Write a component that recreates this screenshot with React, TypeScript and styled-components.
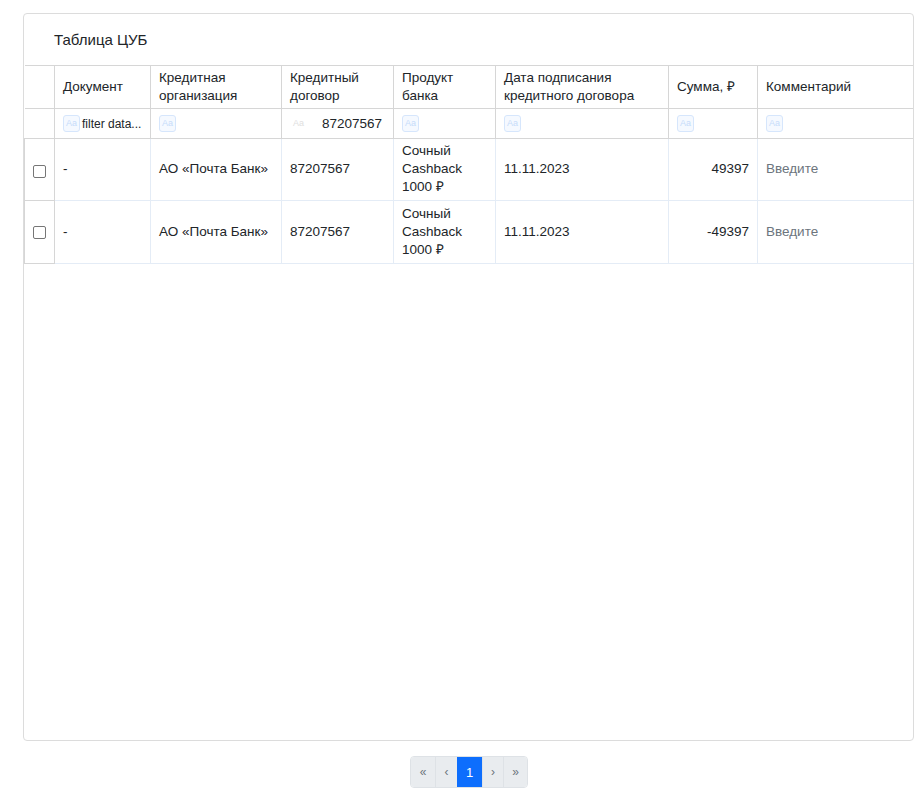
import React from "react";
import styled, { createGlobalStyle } from "styled-components";

const Global = createGlobalStyle`
  html, body { margin: 0; padding: 0; background: #fff; }
  body { font-family: "Liberation Sans", Arial, sans-serif; color: #212529; }
  * { box-sizing: border-box; }
`;

const Page = styled.div`
  padding: 13px 6px 0 23px;
`;

const Card = styled.div`
  width: 891px;
  height: 728px;
  border: 1px solid #dcdcdc;
  border-radius: 4px;
  background: #fff;
  display: flex;
  flex-direction: column;
  overflow: hidden;
`;

const CardHeader = styled.div`
  height: 51px;
  flex: none;
  padding: 0 30px;
  display: flex;
  align-items: center;
  font-size: 15px;
  color: #212529;
`;

const Table = styled.table`
  border-collapse: collapse;
  table-layout: fixed;
  width: 889px;
  font-size: 13.5px;
  line-height: 18px;
`;

const Th = styled.th<{ $w: number }>`
  width: ${(p) => p.$w}px;
  border: 1px solid #d6d6d6;
  padding: 2px 8px 3px;
  height: 43px;
  text-align: left;
  font-weight: 400;
  vertical-align: middle;
  &:first-child { border-left: none; }
  &:last-child { border-right: none; }
`;

const FilterTd = styled.td`
  border: 1px solid #d6d6d6;
  height: 30px;
  padding: 0 8px;
  vertical-align: middle;
  &:first-child { border-left: none; }
  &:last-child { border-right: none; }
`;

const FilterBox = styled.div`
  display: flex;
  align-items: center;
  height: 22px;
`;

const AaIcon = styled.span<{ $muted?: boolean }>`
  display: inline-flex;
  align-items: center;
  justify-content: center;
  width: 17px;
  height: 17px;
  border-radius: 3px;
  border: 1px solid ${(p) => (p.$muted ? "transparent" : "#d6e6fc")};
  background: ${(p) => (p.$muted ? "transparent" : "#f5f9ff")};
  color: ${(p) => (p.$muted ? "#e0e0e0" : "#c6dcfa")};
  font-size: 9px;
  line-height: 1;
  flex: none;
`;

const FilterText = styled.span<{ $value?: boolean }>`
  font-size: ${(p) => (p.$value ? "13.5px" : "12px")};
  color: #212529;
  margin-left: ${(p) => (p.$value ? "15px" : "2px")};
  white-space: nowrap;
`;

const Td = styled.td<{ $right?: boolean; $muted?: boolean; $check?: boolean }>`
  border: 1px solid #e4ecf6;
  border-top: none;
  padding: 4px 8px;
  height: 62px;
  vertical-align: middle;
  text-align: ${(p) => (p.$right ? "right" : "left")};
  color: ${(p) => (p.$muted ? "#6c757d" : "#212529")};
  ${(p) =>
    p.$check &&
    `border-color: #d6d6d6; border-left: 1px solid #d6d6d6; text-align: center; padding: 0;`}
  &:last-child { border-right: none; }
`;

const FirstRowTd = styled(Td)`
  border-top: 1px solid #d6d6d6;
  height: 61px;
  padding-top: 3px;
`;

const Checkbox = styled.span`
  display: inline-block;
  width: 13px;
  height: 13px;
  border: 1px solid #767676;
  border-radius: 2px;
  vertical-align: middle;
  background: #fff;
  margin-left: -1px;
`;

const Footer = styled.div`
  display: flex;
  justify-content: center;
  padding: 15px 0 0 0;
  width: 891px;
`;

const Pager = styled.div`
  display: flex;
  height: 32px;
  border: 1px solid #dee2e6;
  border-radius: 4px;
  overflow: hidden;
  margin-left: 1px;
`;

const PageBtn = styled.span<{ $w: number; $active?: boolean }>`
  width: ${(p) => p.$w}px;
  display: flex;
  align-items: center;
  justify-content: center;
  background: ${(p) => (p.$active ? "#0d6efd" : "#e9ecef")};
  color: ${(p) => (p.$active ? "#fff" : "#6c757d")};
  font-size: ${(p) => (p.$active ? "13px" : "12px")};
  border-left: ${(p) => (p.$active ? "none" : "1px solid #dee2e6")};
  &:first-child { border-left: none; }
`;

const cols = [
  { w: 30, label: "" },
  { w: 96, label: "Документ" },
  { w: 131, label: "Кредитная организация" },
  { w: 112, label: "Кредитный договор" },
  { w: 102, label: "Продукт банка" },
  { w: 173, label: "Дата подписания кредитного договора" },
  { w: 89, label: "Сумма, ₽" },
  { w: 156, label: "Комментарий" },
];

const rows = [{ sum: "49397" }, { sum: "-49397" }];

export default function App() {
  return (
    <>
      <Global />
      <Page>
        <Card>
          <CardHeader>Таблица ЦУБ</CardHeader>
          <Table>
            <thead>
              <tr>
                {cols.map((c, i) => (
                  <Th key={i} $w={c.w}>
                    {c.label}
                  </Th>
                ))}
              </tr>
              <tr>
                <FilterTd />
                <FilterTd>
                  <FilterBox>
                    <AaIcon>Aa</AaIcon>
                    <FilterText>filter data...</FilterText>
                  </FilterBox>
                </FilterTd>
                <FilterTd>
                  <FilterBox>
                    <AaIcon>Aa</AaIcon>
                  </FilterBox>
                </FilterTd>
                <FilterTd>
                  <FilterBox>
                    <AaIcon $muted>Aa</AaIcon>
                    <FilterText $value>87207567</FilterText>
                  </FilterBox>
                </FilterTd>
                {[0, 1, 2, 3].map((k) => (
                  <FilterTd key={k}>
                    <FilterBox>
                      <AaIcon>Aa</AaIcon>
                    </FilterBox>
                  </FilterTd>
                ))}
              </tr>
            </thead>
            <tbody>
              {rows.map((r, i) => {
                const C = i === 0 ? FirstRowTd : Td;
                return (
                  <tr key={i}>
                    <C $check>
                      <Checkbox />
                    </C>
                    <C>-</C>
                    <C>АО «Почта Банк»</C>
                    <C>87207567</C>
                    <C>
                      Сочный
                      <br />
                      Cashback
                      <br />
                      1000 ₽
                    </C>
                    <C>11.11.2023</C>
                    <C $right>{r.sum}</C>
                    <C $muted>Введите</C>
                  </tr>
                );
              })}
            </tbody>
          </Table>
        </Card>
        <Footer>
          <Pager>
            <PageBtn $w={24}>«</PageBtn>
            <PageBtn $w={22}>‹</PageBtn>
            <PageBtn $w={25} $active>
              1
            </PageBtn>
            <PageBtn $w={21}>›</PageBtn>
            <PageBtn $w={24}>»</PageBtn>
          </Pager>
        </Footer>
      </Page>
    </>
  );
}
